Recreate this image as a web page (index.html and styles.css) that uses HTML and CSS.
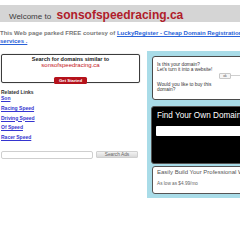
FILE: index.html
```html
<!DOCTYPE html>
<html lang="en">
<head>
    <meta charset="UTF-8">
    <meta name="viewport" content="width=device-width, initial-scale=1.0">
    <title>sonsofspeedracing.ca</title>
    <link rel="stylesheet" href="styles.css">
</head>
<body>

    <div class="header">
        <span class="welcome">Welcome to</span>
        <span class="domain">sonsofspeedracing.ca</span>
    </div>

    <p class="courtesy">This Web page parked FREE courtesy of <a href="#">LuckyRegister - Cheap Domain Registration services .</a></p>

    <div class="main">
        <div class="left">
            <div class="search-box">
                <div class="search-title">Search for domains similar to</div>
                <div class="search-domain">sonsofspeedracing.ca</div>
                <span class="btn-start">Get Started</span>
            </div>

            <div class="related-title">Related Links</div>
            <div class="related">
                <a href="#">Son</a>
                <a href="#">Racing Speed</a>
                <a href="#">Driving Speed</a>
                <a href="#">Of Speed</a>
                <a href="#">Racer Speed</a>
            </div>

            <div class="search-row">
                <input type="text" class="search-input">
                <span class="btn-ads">Search Ads</span>
            </div>
        </div>

        <div class="right">
            <div class="claim">
                <p>Is this your domain?<br>Let's turn it into a website!</p>
                <div class="ok-row"><span class="ok">ok</span><span class="ok-line"></span></div>
                <p>Would you like to buy this<br>domain?</p>
            </div>

            <div class="find">
                <div class="find-title">Find Your Own Domain</div>
                <input type="text" class="find-input">
            </div>

            <div class="build">
                <div class="build-title">Easily Build Your Professional Website</div>
                <div class="build-price">As low as $4.99/mo</div>
            </div>
        </div>
    </div>

</body>
</html>
```

FILE: styles.css
```css
html, body { overflow: hidden; }
body { margin: 0; background-color: #fff; font-family: "Liberation Sans", Arial, sans-serif; }

/* Header */
.header {
    margin-top: 5px;
    height: 17px;
    line-height: 17px;
    padding-left: 9px;
    background-color: #d5d5d5;
    white-space: nowrap;
}
.welcome { font-size: 8px; color: #3a3a3a; }
.domain { font-size: 12px; font-weight: bold; color: #b01c2a; margin-left: 1px; }

.courtesy {
    width: 255px;
    margin: 7px 0 0 0;
    font-size: 6px;
    line-height: 8px;
    font-weight: bold;
    color: #777;
}
.courtesy a { color: #2a62d8; }

.main { display: flex; margin-top: 6px; }

/* Kolom kiri */
.left { width: 139px; margin-left: 1px; flex-shrink: 0; }
.search-box {
    margin-top: 3px;
    height: 29px;
    box-sizing: border-box;
    border: 1px solid #3c3c3c;
    border-radius: 2px;
    box-shadow: 0 0 1px #888;
    padding-top: 1px;
    text-align: center;
}
.search-title { font-size: 5.5px; line-height: 6px; font-weight: bold; color: #222; }
.search-domain { font-size: 6px; line-height: 6px; color: #c4161c; }
.btn-start {
    display: inline-block;
    margin-top: 3px;
    width: 33px;
    height: 7px;
    line-height: 7px;
    border-radius: 1.5px;
    background-color: #b5121b;
    color: #fff;
    font-size: 4.3px;
    font-weight: bold;
}

.related-title { margin-top: 6px; font-size: 5px; line-height: 6px; font-weight: bold; color: #333; }
.related { margin-top: -1px; }
.related a {
    display: block;
    height: 9.75px;
    line-height: 9.75px;
    font-size: 5px;
    font-weight: bold;
    color: #3535d0;
}

.search-row { display: flex; align-items: flex-start; margin-top: 8px; }
.search-input {
    width: 92px;
    height: 8px;
    box-sizing: border-box;
    margin: 0;
    padding: 0;
    border: 1px solid #cfcfcf;
    border-radius: 2px;
}
.btn-ads {
    margin-left: 3px;
    width: 42px;
    height: 7px;
    box-sizing: border-box;
    border: 1px solid #d0d0d0;
    border-radius: 1px;
    background: linear-gradient(#f3f3f3, #d9d9d9);
    text-align: center;
    font-size: 4.8px;
    line-height: 5px;
    color: #666;
}

/* Panel kanan */
.right {
    width: 110px;
    margin-left: 7px;
    flex-shrink: 0;
    padding: 5px 0 4px 5px;
    background-color: #a9dce8;
}
.claim {
    height: 44px;
    box-sizing: border-box;
    border: 1px solid #4a4a4a;
    border-radius: 3px;
    background-color: #fff;
    padding: 4.5px 4px 0 4px;
    font-size: 4.8px;
    line-height: 5px;
    color: #333;
}
.claim p { margin: 0; }
.ok-row { display: flex; align-items: center; height: 6px; margin: 1.5px 0 2.5px 0; padding-left: 62px; }
.ok {
    width: 12px;
    height: 6px;
    box-sizing: border-box;
    border: 1px solid #c8c8c8;
    border-radius: 1px;
    background-color: #f5f5f5;
    font-size: 3.5px;
    line-height: 4px;
    text-align: center;
    color: #555;
}
.ok-line { flex: 1; border-top: 1px solid #cfcfcf; margin-top: -2px; }

.find {
    margin: 6px 0 0 -1px;
    height: 58px;
    box-sizing: border-box;
    border: 1px solid #555;
    border-radius: 3px;
    background-color: #000;
    padding: 3.5px 0 0 4px;
}
.find-title { margin-left: 1px; font-size: 8.2px; line-height: 10px; color: #fff; white-space: nowrap; }
.find-input {
    display: block;
    margin: 5.5px 0 0 0;
    width: 100%;
    height: 10px;
    box-sizing: border-box;
    border: none;
    border-radius: 1px;
    padding: 0;
    background-color: #fff;
}

.build {
    margin-top: 2px;
    height: 28px;
    box-sizing: border-box;
    border: 1px solid #555;
    border-radius: 3px;
    background-color: #fff;
    padding: 1.5px 0 0 4px;
    white-space: nowrap;
}
.build-title { font-size: 6px; line-height: 7px; color: #555; }
.build-price { margin-top: 5px; font-size: 4.7px; line-height: 5px; color: #666; }
```
